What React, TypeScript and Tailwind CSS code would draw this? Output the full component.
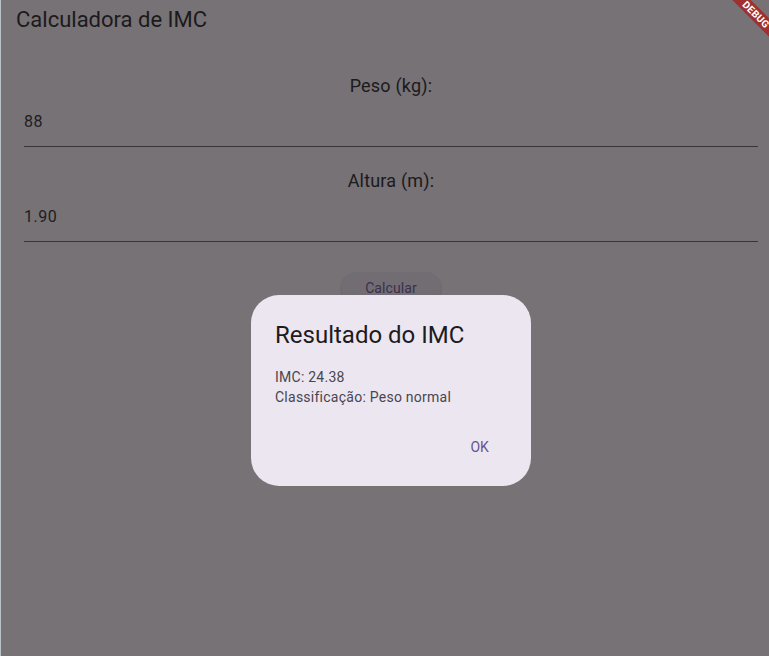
import React from 'react';

const font = { fontFamily: 'Roboto, "Noto Sans", sans-serif' };

function Field({ label, value }: { label: string; value: string }) {
  return (
    <div className="flex flex-col">
      <div className="text-center text-[18px] leading-[24px] text-[#1c1a1d] tracking-[0.2px]">{label}</div>
      <div className="mt-[12px] border-b border-[#38343a] pb-[12px] text-[16px] leading-[24px] text-[#1f1d21] tracking-[0.5px]">
        {value}
      </div>
    </div>
  );
}

export default function App() {
  return (
    <div className="relative h-[656px] w-[769px] overflow-hidden border-l border-[#bcc3cb] bg-[#767275]" style={font}>
      {/* App bar */}
      <div className="flex h-[40px] items-center pl-[15px] text-[22px] leading-[28px] text-[#1c1a1d]">
        Calculadora de IMC
      </div>

      {/* Body */}
      <div className="flex flex-col gap-[22px] pl-[23px] pr-[11px] pt-[34px]">
        <Field label="Peso (kg):" value="88" />
        <Field label="Altura (m):" value="1.90" />
      </div>

      <div className="mt-[30px] flex justify-center pl-[12px]">
        <div className="flex h-[32px] w-[100px] items-center justify-center rounded-full bg-[#716d73] text-[14px] tracking-[0.1px] text-[#39304f] shadow-[0_1px_2px_rgba(0,0,0,0.2)]">
          Calcular
        </div>
      </div>

      {/* Dialog */}
      <div className="absolute left-[250px] top-[295px] w-[280px] rounded-[28px] bg-[#ece6f0] pb-[19px] pl-[24px] pr-[30px] pt-[24px]">
        <div className="text-[24px] leading-[32px] text-[#1d1b20]">Resultado do IMC</div>
        <div className="mt-[16px] text-[14px] leading-[20px] tracking-[0.25px] text-[#49454f]">
          <div>IMC: 24.38</div>
          <div>Classificação: Peso normal</div>
        </div>
        <div className="mt-[20px] flex justify-end">
          <div className="flex h-[40px] items-center px-[12px] text-[14px] tracking-[0.1px] text-[#65558f]">OK</div>
        </div>
      </div>

      {/* Debug banner */}
      <div className="absolute right-[-37px] top-[8px] h-[13px] w-[100px] rotate-45 bg-[#a0302f] text-center text-[10px] font-bold leading-[13px] tracking-[0.3px] text-white">
        DEBUG
      </div>
    </div>
  );
}
